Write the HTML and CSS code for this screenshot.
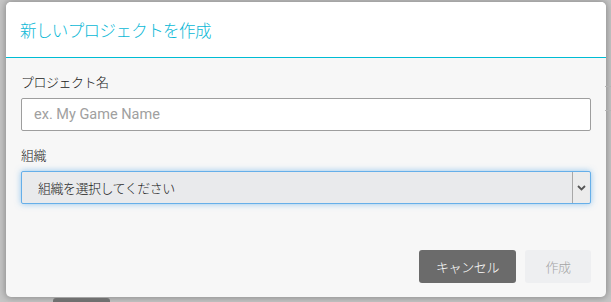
FILE: index.html
```html
<!DOCTYPE html>
<html lang="ja">
<head>
<meta charset="utf-8">
<link rel="stylesheet" href="styles.css">
</head>
<body>
<div class="page">
  <div class="modal">
    <div class="modal-header">
      <h1 class="modal-title">新しいプロジェクトを作成</h1>
    </div>
    <div class="modal-body">
      <div class="form-group">
        <label class="label">プロジェクト名</label>
        <input class="input" type="text" placeholder="ex. My Game Name">
      </div>
      <div class="form-group">
        <label class="label">組織</label>
        <div class="select">
          <span class="select-text">組織を選択してください</span>
          <span class="select-arrow">
            <svg width="9" height="6" viewBox="0 0 9 6"><path d="M1 1 L4.5 4.5 L8 1" fill="none" stroke="#555" stroke-width="1.8"/></svg>
          </span>
        </div>
      </div>
    </div>
    <div class="modal-footer">
      <button class="btn btn-cancel">キャンセル</button>
      <button class="btn btn-create">作成</button>
    </div>
  </div>
  <div class="behind">
    <div class="behind-btn"></div>
  </div>
</div>
</body>
</html>
```
FILE: styles.css
```css
html, body {
  margin: 0;
  padding: 0;
}
body {
  width: 611px;
  height: 302px;
  overflow: hidden;
  background: #c6c6c6;
  font-family: Roboto, "Noto Sans CJK JP", sans-serif;
}
.page {
  padding: 2px 0 0 6px;
  position: relative;
}
.page::after {
  content: "";
  position: absolute;
  right: 0;
  top: 86px;
  width: 6px;
  height: 23px;
  border-top: 1px solid #b4b4b4;
  border-bottom: 1px solid #b4b4b4;
}
.modal {
  width: 600px;
  background: #f7f7f7;
  border-radius: 5px;
  box-shadow: 0 0 7px 1px rgba(0, 0, 0, 0.3);
  overflow: hidden;
}
.modal-header {
  background: #ffffff;
  height: 55px;
  border-bottom: 1px solid #00bcd4;
  display: flex;
  align-items: center;
  padding: 0 14px;
  box-sizing: content-box;
}
.modal-title {
  margin: 0;
  font-size: 16.5px;
  font-weight: 300;
  color: #0ab8d6;
  letter-spacing: -0.6px;
  padding-top: 1px;
}
.modal-body {
  padding: 15px 15px 0 15px;
}
.form-group {
  margin-bottom: 15px;
}
.form-group:last-child {
  margin-bottom: 0;
}
.label {
  display: block;
  font-size: 13px;
  font-weight: 300;
  line-height: 20px;
  color: #222222;
  margin-bottom: 5px;
  letter-spacing: -0.5px;
}
.input {
  display: block;
  box-sizing: border-box;
  width: 570px;
  height: 33px;
  border: 1px solid #9e9e9e;
  border-radius: 2px;
  background: #ffffff;
  padding: 0 12px;
  font-family: Roboto, "Noto Sans CJK JP", sans-serif;
  font-size: 14.5px;
  color: #333;
  outline: none;
}
.input::placeholder {
  color: #a0a0a0;
}
.select {
  box-sizing: border-box;
  width: 570px;
  height: 33px;
  border: 1px solid #66afe9;
  border-radius: 2px;
  background: #e9eaec;
  box-shadow: 0 0 6px rgba(102, 175, 233, 0.7);
  display: flex;
  align-items: center;
  justify-content: space-between;
}
.select-text {
  padding-left: 16px;
  font-size: 13px;
  font-weight: 300;
  color: #222222;
  letter-spacing: -0.5px;
}
.select-arrow {
  width: 16px;
  height: 31px;
  background: #ececec;
  border-left: 1px solid #a8a8a8;
  display: flex;
  align-items: center;
  justify-content: center;
  margin-right: 1px;
}
.modal-footer {
  display: flex;
  justify-content: flex-end;
  gap: 9px;
  padding: 46px 15px 14px 15px;
}
.btn {
  height: 33px;
  border: none;
  border-radius: 3px;
  font-family: Roboto, "Noto Sans CJK JP", sans-serif;
  font-size: 13px;
  font-weight: 300;
  letter-spacing: -0.4px;
  padding: 0;
}
.btn-cancel {
  width: 97px;
  background: #6b6b6b;
  color: #ffffff;
}
.btn-create {
  width: 66px;
  background: #eeeff1;
  color: #a4a4a4;
}
.behind {
  padding: 1px 0 0 47px;
}
.behind-btn {
  width: 57px;
  height: 10px;
  background: #707070;
  border-radius: 3px 3px 0 0;
}
```
